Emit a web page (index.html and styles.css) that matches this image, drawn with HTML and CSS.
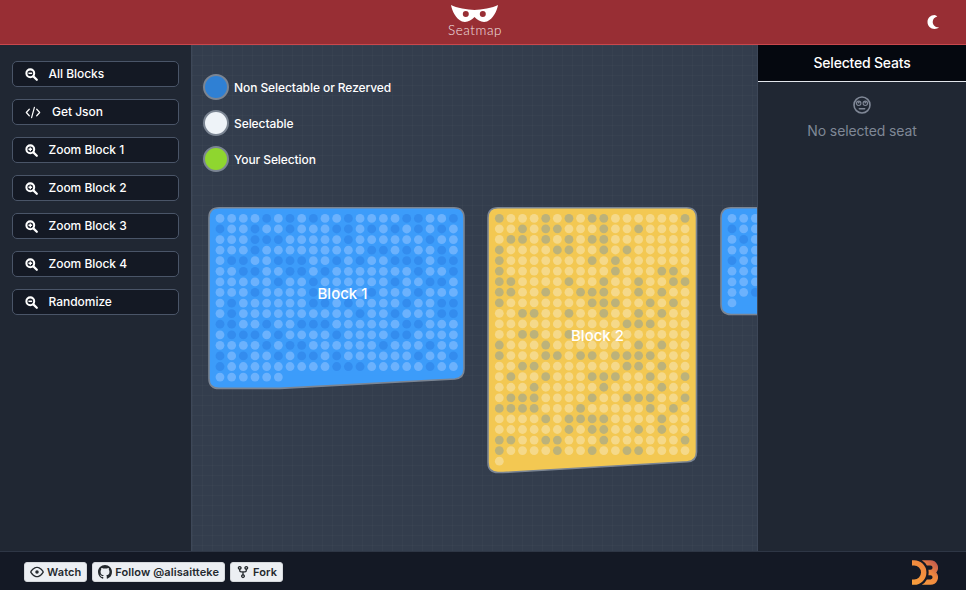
FILE: index.html
```html
<!DOCTYPE html>
<html lang="en">
<head>
<meta charset="utf-8">
<title>Seatmap</title>
<link rel="stylesheet" href="styles.css">
</head>
<body>
<div class="app">
  <header class="topbar">
    <div class="brand">
      <svg class="brand-mask" viewBox="450 4 50 19" aria-hidden="true"><path fill-rule="evenodd" fill="#fff" d="M451 5C456 8 468 9.500 474.500 10C481 9.500 493 8 498 5C497 11 493 19 487 21.500C482 23 478 20.500 474.500 17C471 20.500 467 23 462 21.500C456 19 452 11 451 5ZM465.800 11A3 3 0 1 0 465.800 17A3 3 0 1 0 465.800 11ZM482.800 11A3 3 0 1 0 482.800 17A3 3 0 1 0 482.800 11Z"/></svg>
      <span class="brand-name">Seatmap</span>
    </div>
    <svg class="moon" viewBox="0 0 14 16" aria-hidden="true"><path fill="#fff" d="M8.500 1C4.600 1 1.500 4.100 1.500 8S4.600 15 8.500 15C10.300 15 11.900 14.300 13 13.300C9.700 13.700 6.700 11.300 6.700 8C6.700 5.300 8.800 3 11.300 2.600C10.500 1.800 9.500 1 8.500 1Z"/></svg>
  </header>

  <div class="workspace">
    <nav class="sidebar">
      <button class="tool"><svg class="tool-icon" viewBox="0 0 14 14"><circle cx="5.700" cy="5.700" r="4.200" fill="none" stroke="#fff" stroke-width="2.200"/><path d="M9 9l3.700 3.700" stroke="#fff" stroke-width="2.400" stroke-linecap="round"/><path d="M3.700 5.700h4" stroke="#fff" stroke-width="1.600"/></svg>All Blocks</button>
      <button class="tool"><svg class="tool-icon tool-icon-code" viewBox="0 0 16 14"><path d="M4 3.500L.8 7L4 10.500M12 3.500L15.200 7L12 10.500M9.500 1.500L6.500 12.500" fill="none" stroke="#fff" stroke-width="1.300" stroke-linecap="round" stroke-linejoin="round"/></svg>Get Json</button>
      <button class="tool"><svg class="tool-icon" viewBox="0 0 14 14"><circle cx="5.700" cy="5.700" r="4.200" fill="none" stroke="#fff" stroke-width="2.200"/><path d="M9 9l3.700 3.700" stroke="#fff" stroke-width="2.400" stroke-linecap="round"/><path d="M3.700 5.700h4M5.700 3.700v4" stroke="#fff" stroke-width="1.500"/></svg>Zoom Block 1</button>
      <button class="tool"><svg class="tool-icon" viewBox="0 0 14 14"><circle cx="5.700" cy="5.700" r="4.200" fill="none" stroke="#fff" stroke-width="2.200"/><path d="M9 9l3.700 3.700" stroke="#fff" stroke-width="2.400" stroke-linecap="round"/><path d="M3.700 5.700h4M5.700 3.700v4" stroke="#fff" stroke-width="1.500"/></svg>Zoom Block 2</button>
      <button class="tool"><svg class="tool-icon" viewBox="0 0 14 14"><circle cx="5.700" cy="5.700" r="4.200" fill="none" stroke="#fff" stroke-width="2.200"/><path d="M9 9l3.700 3.700" stroke="#fff" stroke-width="2.400" stroke-linecap="round"/><path d="M3.700 5.700h4M5.700 3.700v4" stroke="#fff" stroke-width="1.500"/></svg>Zoom Block 3</button>
      <button class="tool"><svg class="tool-icon" viewBox="0 0 14 14"><circle cx="5.700" cy="5.700" r="4.200" fill="none" stroke="#fff" stroke-width="2.200"/><path d="M9 9l3.700 3.700" stroke="#fff" stroke-width="2.400" stroke-linecap="round"/><path d="M3.700 5.700h4M5.700 3.700v4" stroke="#fff" stroke-width="1.500"/></svg>Zoom Block 4</button>
      <button class="tool"><svg class="tool-icon" viewBox="0 0 14 14"><circle cx="5.700" cy="5.700" r="4.200" fill="none" stroke="#fff" stroke-width="2.200"/><path d="M9 9l3.700 3.700" stroke="#fff" stroke-width="2.400" stroke-linecap="round"/><path d="M3.700 5.700h4" stroke="#fff" stroke-width="1.600"/></svg>Randomize</button>
    </nav>

    <main class="stage">
      <ul class="legend">
        <li class="legend-item"><span class="swatch swatch-blue"></span>Non Selectable or Rezerved</li>
        <li class="legend-item"><span class="swatch swatch-white"></span>Selectable</li>
        <li class="legend-item"><span class="swatch swatch-green"></span>Your Selection</li>
      </ul>
      <svg id="map" class="map" viewBox="192 190 565 361"></svg>
    </main>

    <aside class="seats">
      <h2 class="seats-title">Selected Seats</h2>
      <div class="seats-empty">
        <svg class="seats-face" viewBox="0 0 18 18" aria-hidden="true"><g fill="none" stroke="#7f8796"><circle cx="9" cy="9" r="8" stroke-width="1.600"/><circle cx="5.700" cy="7.300" r="2.200" stroke-width="1.100"/><circle cx="12.300" cy="7.300" r="2.200" stroke-width="1.100"/><path d="M6.300 12.800h5.400" stroke-width="1.400" stroke-linecap="round"/></g><circle cx="5.700" cy="6.500" r=".9" fill="#7f8796"/><circle cx="12.300" cy="6.500" r=".9" fill="#7f8796"/></svg>
        <p class="seats-note">No selected seat</p>
      </div>
    </aside>
  </div>

  <footer class="bottombar">
    <div class="gh-buttons">
      <a class="gh"><svg class="gh-icon" viewBox="0 0 16 16"><path fill-rule="evenodd" d="M1.679 7.932c.412-.621 1.242-1.75 2.366-2.717C5.175 4.242 6.527 3.500 8 3.500c1.473 0 2.824.742 3.955 1.715 1.124.967 1.954 2.096 2.366 2.717a.119.119 0 010 .136c-.412.621-1.242 1.750-2.366 2.717C10.825 11.758 9.473 12.500 8 12.500c-1.473 0-2.824-.742-3.955-1.715C2.920 9.818 2.090 8.690 1.679 8.068a.119.119 0 010-.136zM8 2c-1.981 0-3.670.992-4.933 2.078C1.797 5.169.880 6.423.430 7.100a1.619 1.619 0 000 1.798c.450.678 1.367 1.932 2.637 3.024C4.329 13.008 6.019 14 8 14c1.981 0 3.670-.992 4.933-2.078 1.270-1.091 2.187-2.345 2.637-3.023a1.619 1.619 0 000-1.798c-.450-.678-1.367-1.932-2.637-3.023C11.671 2.992 9.981 2 8 2zm0 8a2 2 0 100-4 2 2 0 000 4z"/></svg>Watch</a>
      <a class="gh"><svg class="gh-icon" viewBox="0 0 16 16"><path fill-rule="evenodd" d="M8 0C3.580 0 0 3.580 0 8c0 3.540 2.290 6.530 5.470 7.590.4.070.550-.170.550-.380 0-.190-.010-.820-.010-1.490-2.010.370-2.530-.490-2.690-.940-.090-.230-.480-.940-.820-1.130-.280-.150-.680-.520-.010-.530.630-.010 1.080.580 1.230.820.720 1.210 1.870.870 2.330.660.070-.520.280-.870.510-1.070-1.780-.2-3.640-.890-3.640-3.950 0-.870.310-1.590.820-2.150-.080-.2-.360-1.020.080-2.120 0 0 .670-.210 2.200.820.640-.180 1.320-.270 2-.270.680 0 1.360.090 2 .270 1.530-1.040 2.200-.820 2.200-.820.440 1.100.160 1.920.080 2.120.510.560.820 1.270.820 2.150 0 3.070-1.870 3.750-3.650 3.950.290.250.540.730.540 1.480 0 1.070-.010 1.930-.010 2.200 0 .210.150.460.550.380A8.013 8.013 0 0016 8c0-4.420-3.580-8-8-8z"/></svg>Follow @alisaitteke</a>
      <a class="gh"><svg class="gh-icon" viewBox="0 0 16 16"><path fill-rule="evenodd" d="M5 3.250a.750.750 0 11-1.500 0 .750.750 0 011.500 0zm0 2.122a2.250 2.250 0 10-1.500 0v.878A2.250 2.250 0 005.750 8.500h1.500v2.128a2.251 2.251 0 101.500 0V8.500h1.500a2.250 2.250 0 002.250-2.250v-.878a2.250 2.250 0 10-1.500 0v.878a.750.750 0 01-.750.750h-4.500A.750.750 0 015 6.250v-.878zm3.750 7.378a.750.750 0 11-1.500 0 .750.750 0 011.500 0zm3-8.750a.750.750 0 100-1.500.750.750 0 000 1.500z"/></svg>Fork</a>
    </div>
    <svg class="d3" viewBox="0 0 96 91" aria-hidden="true">
      <defs>
        <linearGradient id="d3g" x1="0" y1="1" x2="1" y2="0"><stop offset="0" stop-color="#f9a03c"/><stop offset=".6" stop-color="#f0883f"/><stop offset="1" stop-color="#b84e51"/></linearGradient>
      </defs>
      <path fill="url(#d3g)" d="M0,0h7.750a45.500,45.500 0 1 1 0,91h-7.750v-20h7.750a25.500,25.500 0 1 0 0,-51h-7.750zm36.251,0h32a27.750,27.750 0 0 1 21.331,45.500a27.750,27.750 0 0 1 -21.331,45.500h-32a53.690,53.690 0 0 0 18.746,-20h13.253a7.750,7.750 0 1 0 0,-15.500h-7.750a53.690,53.690 0 0 0 0,-20h7.750a7.750,7.750 0 1 0 0,-15.500h-13.253a53.690,53.690 0 0 0 -18.746,-20z"/>
    </svg>
  </footer>
</div>
<script src="map.js"></script>
</body>
</html>
```

FILE: styles.css
```css
* { box-sizing: border-box; }
html, body { margin: 0; height: 100%; }
body { font-family: Inter, "Liberation Sans", sans-serif; color: #fff; background: #141925; overflow: hidden; }
.app { width: 966px; height: 590px; display: flex; flex-direction: column; }

.topbar { height: 45px; flex: none; display: flex; justify-content: space-between; align-items: center; padding: 0 26px 0 446px; background: #982e34; border-bottom: 1px solid #c9484d; }
.brand { width: 58px; align-self: flex-start; padding-top: 4px; display: flex; flex-direction: column; align-items: center; }
.brand-mask { width: 50px; height: 19px; display: block; flex: none; }
.brand-name { font-family: Lato, sans-serif; font-weight: 300; font-size: 13.500px; line-height: 15px; letter-spacing: .55px; color: #f3e3e3; white-space: nowrap; }
.moon { width: 14px; height: 16px; }

.workspace { flex: 1; display: flex; min-height: 0; }
.sidebar { width: 192px; flex: none; background: #202733; border-right: 1px solid #3d4758; padding: 16px 12px 0; display: flex; flex-direction: column; gap: 12px; }
.tool { height: 26px; width: 167px; flex: none; display: flex; align-items: center; padding: 0 0 0 12px; background: #141924; color: #fff; border: 1px solid #4a5568; border-radius: 5px; font: 500 12px/1 Inter, sans-serif; letter-spacing: -.03px; }
.tool-icon { width: 13px; height: 13px; margin-right: 10.500px; flex: none; }
.tool-icon-code { width: 16px; margin-right: 11px; }

.stage { flex: 1; min-width: 0; display: flex; flex-direction: column; overflow: hidden; background-color: #333d4d; background-image: linear-gradient(rgba(255,255,255,.02) 1px, transparent 1px), linear-gradient(90deg, rgba(255,255,255,.02) 1px, transparent 1px); background-size: 10px 10px; }
.legend { list-style: none; margin: 0; padding: 29px 11px 0; display: flex; flex-direction: column; gap: 10px; height: 145px; flex: none; }
.legend-item { display: flex; align-items: center; gap: 5px; font-size: 12px; font-weight: 500; letter-spacing: -.08px; height: 26px; }
.swatch { width: 26px; height: 26px; border-radius: 50%; border: 2px solid #7b8593; flex: none; }
.swatch-blue { background: #2f80d4; }
.swatch-white { background: #eef3f8; }
.swatch-green { background: #8fd62f; }
.map { display: block; width: 565px; height: 361px; flex: none; }
.block-blue { fill: #3c9cfa; stroke: #7b8593; stroke-width: 1.600; }
.block-yellow { fill: #f3c852; stroke: #7b8593; stroke-width: 1.600; }
.seat-blue-free { fill: #6cb2fd; }
.seat-blue-taken { fill: #338cee; }
.seat-yellow-free { fill: #f5d98a; }
.seat-yellow-taken { fill: #bcb27a; }
.block-label { fill: #fff; font: 500 15px Inter, sans-serif; text-anchor: middle; dominant-baseline: central; }

.seats { width: 209px; flex: none; background: #202733; border-left: 1px solid #3d4758; }
.seats-title { margin: 0; height: 37px; padding-bottom: 1px; background: #05080f; border-bottom: 1px solid #e2e6ec; display: flex; align-items: center; justify-content: center; font-size: 14px; font-weight: 500; letter-spacing: -.2px; }
.seats-empty { display: flex; flex-direction: column; align-items: center; padding-top: 14px; }
.seats-face { width: 18px; height: 18px; display: block; }
.seats-note { margin: 8px 0 0; font-size: 14px; line-height: 17px; letter-spacing: -.12px; color: #7f8796; }

.bottombar { height: 39px; flex: none; display: flex; align-items: center; justify-content: space-between; padding: 2px 28px 0 24px; background: #141925; border-top: 1px solid #2e3645; }
.gh-buttons { display: flex; gap: 5px; }
.gh { height: 20px; display: flex; align-items: center; gap: 3px; padding: 0 5px; background: #eceff3; border: 1px solid #d5d8dc; border-radius: 3px; color: #24292e; font: 600 11px/1 Inter, sans-serif; letter-spacing: .1px; }
.gh-icon { width: 14px; height: 14px; fill: #24292e; flex: none; }
.d3 { width: 26px; height: 25px; display: block; }
```

FILE: map.js
```js
var NS = 'http://www.w3.org/2000/svg';
var map = document.getElementById('map');

function el(name, attrs, text) {
  var node = document.createElementNS(NS, name);
  for (var key in attrs) node.setAttribute(key, attrs[key]);
  if (text) node.textContent = text;
  map.appendChild(node);
}

var blocks = [
  {
    color: 'blue', x: 220, y: 218.4, dx: 11.67, dy: 10.58, label: 'Block 1', lx: 342.5, ly: 293,
    outline: 'M219 207.800H454Q464 207.800 464 217.800V369Q464 378 455 379L280 388.400H219Q209 388.400 209 378.400V217.800Q209 207.800 219 207.800Z',
    rows: [
      '111101010110111100110', '011011011100101010101', '111000111110111111011', '111011111111100101101',
      '100110001101011000100', '110011001011111110110', '111110110111111011001', '111011110111101110111',
      '101111110010111101100', '101111111111011011100', '001101100011111100111', '100010111101111001111',
      '111101001111110111011', '010110100101111110110', '011111111100011111011', '111111'
    ]
  },
  {
    color: 'yellow', x: 499.3, y: 218.3, dx: 11.61, dy: 10.56, label: 'Block 2', lx: 597.5, ly: 335,
    outline: 'M498 207.800H686.500Q696.500 207.800 696.500 217.800V452Q696.500 461 687.500 461.800L503 472.500H498Q488 472.500 488 462.500V217.800Q488 207.800 498 207.800Z',
    rows: [
      '01110101001111110', '11010011101101111',
      '10010101001111111', '01111001101011111', '01111111010111111', '01111111110111001',
      '00111101101101100', '00110110001101011', '01111111000110101', '11001101101101011',
      '11111111111000111', '11001101111111111', '01110111111101011', '01110010010000111',
      '11001111111001011', '10110111000110110', '11101111101111011', '10001111011000110',
      '00001110111110101', '11110100001111011', '11111101001101011', '00110011101111110',
      '01111011011001111', '1'
    ]
  },
  {
    color: 'blue', x: 732, y: 218.3, dx: 11.67, dy: 10.58, label: '', lx: 0, ly: 0,
    outline: 'M731 207.800H800V314.500H731Q721 314.500 721 304.500V217.800Q721 207.800 731 207.800Z',
    rows: ['111', '011', '101', '111', '011', '111', '111', '110', '1']
  }
];

blocks.forEach(function (block) {
  el('path', { d: block.outline, 'class': 'block-' + block.color });
  block.rows.forEach(function (row, r) {
    row.split('').forEach(function (seat, c) {
      el('circle', {
        cx: block.x + c * block.dx,
        cy: block.y + r * block.dy,
        r: 4.4,
        'class': 'seat-' + block.color + (seat === '1' ? '-free' : '-taken')
      });
    });
  });
  if (block.label) el('text', { x: block.lx, y: block.ly, 'class': 'block-label' }, block.label);
});
```
